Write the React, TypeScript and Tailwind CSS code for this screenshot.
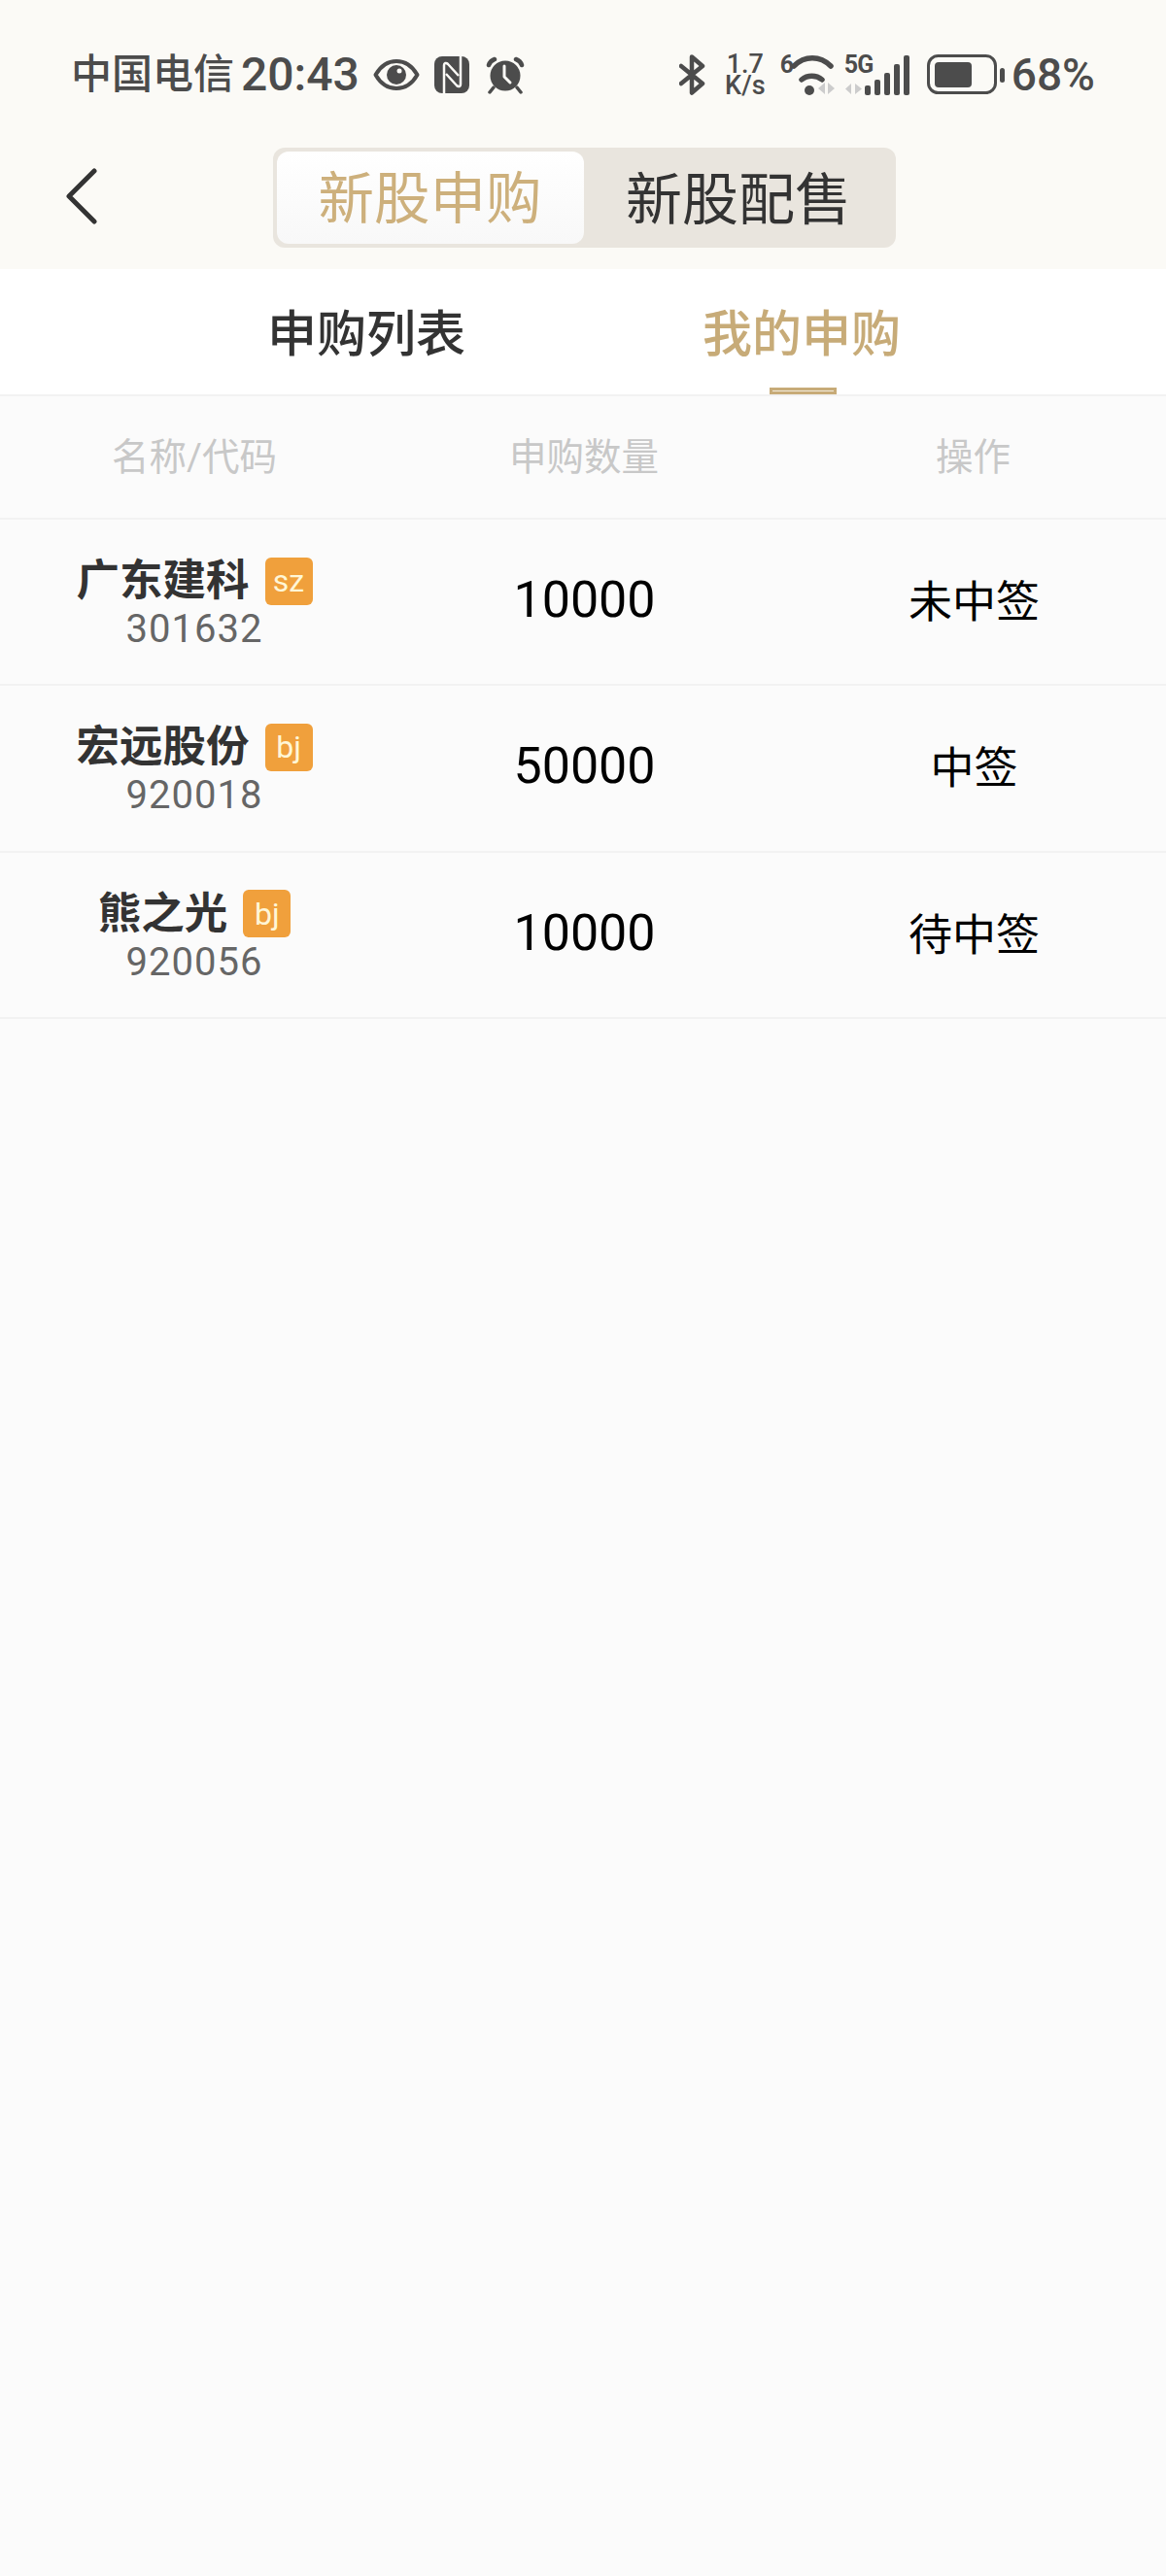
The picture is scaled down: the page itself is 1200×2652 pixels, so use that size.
const cjk = "font-['Roboto','Noto_Sans_CJK_SC',sans-serif]";

const rows = [
    { name: '广东建科', market: 'sz', code: '301632', amount: '10000', status: '未中签' },
    { name: '宏远股份', market: 'bj', code: '920018', amount: '50000', status: '中签' },
    { name: '熊之光', market: 'bj', code: '920056', amount: '10000', status: '待中签' },
];

function EyeIcon() {
    return (
        <svg viewBox="0 0 48 34" className="w-[48px] h-[34px]" fill="none">
            <path d="M2.500 17C8 7.500 15 3 24 3s16 4.500 21.500 14C40 26.500 33 31 24 31S8 26.500 2.500 17Z" stroke="#4c4c4c" strokeWidth="4" strokeLinejoin="round" />
            <circle cx="24" cy="17" r="10" fill="#4c4c4c" />
            <circle cx="27" cy="13" r="2.500" fill="#fbfaf6" />
        </svg>
    );
}

function NfcIcon() {
    return (
        <svg viewBox="0 0 36 38" className="w-[36px] h-[38px]">
            <rect x="0" y="0" width="36" height="38" rx="8" fill="#4c4c4c" />
            <path d="M10 38V9c0-2 2-3 4-1l11 12" stroke="#fbfaf6" strokeWidth="2.500" fill="none" />
            <path d="M27 0v29c0 2-2 3-4 1L12 18" stroke="#fbfaf6" strokeWidth="2.500" fill="none" />
        </svg>
    );
}

function AlarmIcon() {
    return (
        <svg viewBox="0 0 40 40" className="w-[40px] h-[40px]">
            <circle cx="20" cy="21" r="15.500" fill="#4c4c4c" />
            <path d="M3 10c1-3 3-5 6-6M37 10c-1-3-3-5-6-6" stroke="#4c4c4c" strokeWidth="4.500" fill="none" strokeLinecap="round" />
            <path d="M8 33l-4 5M32 33l4 5" stroke="#4c4c4c" strokeWidth="3.500" strokeLinecap="round" />
            <path d="M19 11v11l6 6" stroke="#fbfaf6" strokeWidth="3" fill="none" strokeLinecap="round" strokeLinejoin="round" />
        </svg>
    );
}

function BluetoothIcon() {
    return (
        <svg viewBox="0 0 28 42" className="w-[28px] h-[42px]" fill="none">
            <path d="M2 12l22 18-11 9.500V2.500L24 12 2 30" stroke="#4c4c4c" strokeWidth="4.500" strokeLinecap="round" strokeLinejoin="round" />
        </svg>
    );
}

function WifiIcon() {
    return (
        <span className="relative block w-[62px] h-[44px]">
            <span className="absolute left-0 top-[-1px] text-[25px] font-bold leading-none">6</span>
            <svg viewBox="0 0 62 44" className="w-[62px] h-[44px]" fill="none">
                <path d="M14 13C25 2 41 2 52 13" stroke="#4c4c4c" strokeWidth="5.500" strokeLinecap="round" />
                <path d="M22 27c6-5 15-5 21 0" stroke="#4c4c4c" strokeWidth="5.500" strokeLinecap="round" />
                <circle cx="30" cy="38" r="5" fill="#4c4c4c" />
                <path d="M46 30v12l-7-6ZM49 42V30l7 6Z" fill="#cccccc" />
            </svg>
        </span>
    );
}

function SignalIcon() {
    return (
        <span className="relative block w-[68px] h-[44px]">
            <span className="absolute left-0 top-[-1px] text-[25px] font-bold leading-none tracking-[-1px]">5G</span>
            <svg viewBox="0 0 68 44" className="w-[68px] h-[44px]">
                <path d="M7 31v11l-6-5.500ZM11 42V31l7 5.500Z" fill="#cccccc" />
                <rect x="21" y="33" width="6" height="10" rx="2" fill="#4c4c4c" />
                <rect x="31" y="27" width="6" height="16" rx="2" fill="#4c4c4c" />
                <rect x="41" y="20" width="6" height="23" rx="2" fill="#4c4c4c" />
                <rect x="51" y="11" width="6" height="32" rx="2" fill="#4c4c4c" />
                <rect x="61" y="2" width="6" height="41" rx="2" fill="#4c4c4c" />
            </svg>
        </span>
    );
}

function BatteryIcon() {
    return (
        <svg viewBox="0 0 80 42" className="w-[80px] h-[42px]" fill="none">
            <rect x="1.500" y="1.500" width="69" height="38" rx="10" stroke="#4c4c4c" strokeWidth="3" />
            <rect x="8" y="8" width="38" height="26" rx="4" fill="#4c4c4c" />
            <rect x="75" y="14" width="5" height="15" rx="2.500" fill="#4c4c4c" />
        </svg>
    );
}

export default function App() {
    return (
        <main className={`w-full min-h-[2652px] bg-[#fbfbfb] ${cjk}`}>
            {/* Status bar + nav */}
            <header className="bg-[#fbfaf6] h-[277px]">
                <div className="flex items-center justify-between h-[152px] pl-[73px] pr-[73px] pt-[2px] text-[#4c4c4c]">
                    <div className="flex items-center">
                        <span className="text-[42px] font-medium leading-none">中国电信</span>
                        <span className="text-[48px] font-medium leading-none ml-[7px]">20:43</span>
                        <span className="ml-[14px]"><EyeIcon /></span>
                        <span className="ml-[15px]"><NfcIcon /></span>
                        <span className="ml-[17px]"><AlarmIcon /></span>
                    </div>
                    <div className="flex items-center">
                        <BluetoothIcon />
                        <div className="w-[44px] ml-[18px] text-center text-[27px] font-medium leading-[22px]">
                            1.7<br />K/s
                        </div>
                        <span className="ml-[14px]"><WifiIcon /></span>
                        <span className="ml-[4px]"><SignalIcon /></span>
                        <span className="ml-[17px]"><BatteryIcon /></span>
                        <span className="text-[46px] font-medium leading-none ml-[7px]">68%</span>
                    </div>
                </div>

                <div className="relative flex justify-center">
                    <svg viewBox="0 0 34 58" className="absolute left-[67px] top-[21px] w-[34px] h-[58px]" fill="none">
                        <path d="M30 3L4 29l26 26" stroke="#333333" strokeWidth="5" strokeLinecap="round" strokeLinejoin="round" />
                    </svg>
                    <div className="flex w-[641px] h-[103px] ml-[2px] bg-[#e9e5de] rounded-[12px] p-[4px]">
                        <div className="flex items-center justify-center w-[316px] pt-[4px] rounded-[12px] bg-gradient-to-b from-white to-[#f8f8f8] text-[#cdb07c] text-[57.500px] leading-none">
                            新股申购
                        </div>
                        <div className="flex items-center justify-center flex-1 pt-[4px] pl-[2px] text-[#333333] text-[58px] leading-none">
                            新股配售
                        </div>
                    </div>
                </div>
            </header>

            {/* Tabs */}
            <nav className="bg-white h-[129px] flex justify-center">
                <div className="w-[894px] ml-[3px] grid grid-cols-2">
                    <div className="flex items-center justify-center pt-[5px] pr-[2px] text-[51px] font-medium text-[#333333] leading-none">申购列表</div>
                    <div className="relative flex items-center justify-center pt-[5px] text-[51px] font-medium text-[#c7ab78] leading-none">
                        我的申购
                        <div className="absolute bottom-0 left-[190px] w-[69px] h-[7px] bg-[#f3ecdc] border-[3px] border-[#c7ab78]" />
                    </div>
                </div>
            </nav>

            {/* Table */}
            <section className="border-t-[2px] border-[#f2f2f2]">
                <div className="grid grid-cols-3 h-[127px] pt-[1px] items-center text-center text-[38.500px] text-[#c8c8c8] leading-none border-b-[2px] border-[#f2f2f2]">
                    <div>名称/代码</div>
                    <div className="pl-[2px]">申购数量</div>
                    <div className="pl-[3px]">操作</div>
                </div>
                {rows.map(row => (
                    <div key={row.code} className="grid grid-cols-3 h-[171.330px] items-center text-center border-b-[2px] border-[#f2f2f2]">
                        <div className="flex flex-col items-center pt-[1px]">
                            <div className="flex items-center gap-[16px] h-[52px]">
                                <span className="text-[44.500px] font-bold text-[#333333] leading-none">{row.name}</span>
                                <span className="flex items-center justify-center w-[49px] h-[49px] rounded-[6px] bg-[#f0a03c] text-[#fff6d6] text-[32px] leading-none">{row.market}</span>
                            </div>
                            <div className="text-[40px] text-[#666666] leading-none tracking-[1px] mt-[4px]">{row.code}</div>
                        </div>
                        <div className="pl-[3px] pb-[3px] text-[52px] text-black leading-none">{row.amount}</div>
                        <div className="pl-[5px] pt-[2px] text-[45px] text-black leading-none">{row.status}</div>
                    </div>
                ))}
            </section>
        </main>
    );
}
